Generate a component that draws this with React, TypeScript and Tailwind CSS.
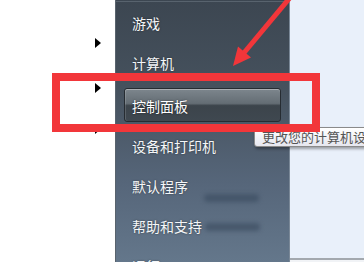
import React from 'react';

const items = [
  { label: '游戏' },
  { label: '计算机' },
];

const lower = [
  { label: '设备和打印机', blur: 0 },
  { label: '默认程序', blur: 16 },
  { label: '帮助和支持', blur: 2 },
  { label: '运行...', blur: 0 },
];

function Arrow() {
  return (
    <svg className="absolute inset-0 pointer-events-none" width="364" height="262" viewBox="0 0 364 262">
      <line x1="293" y1="-6" x2="243" y2="54" stroke="#f2363a" strokeWidth="5" />
      <polygon points="233,66 238,46.5 251,57.5" fill="#f2363a" />
    </svg>
  );
}

export default function App() {
  return (
    <div className="relative w-[364px] h-[262px] overflow-hidden bg-white font-['Noto_Sans_CJK_SC',sans-serif]">
      <div className="flex h-full">
        {/* left list arrows */}
        <div className="w-[115px] shrink-0 flex flex-col pl-[95px] pt-[38px]">
          <div className="shrink-0 w-0 h-0 border-y-[5px] border-y-transparent border-l-[6px] border-l-black" />
          <div className="shrink-0 mt-[35px] w-0 h-0 border-y-[5px] border-y-transparent border-l-[6px] border-l-black" />
          <div className="shrink-0 mt-[31px] w-0 h-0 border-y-[5px] border-y-transparent border-l-[6px] border-l-black" />
        </div>

        {/* start menu right pane */}
        <div className="w-[175px] shrink-0 flex flex-col overflow-hidden border-l border-[#59636d] border-r border-r-[#7a8897] bg-[linear-gradient(to_bottom,#3c4651_0%,#46525e_35%,#56667a_70%,#64778b_100%)]">
          <div className="shrink-0 h-px mt-px bg-[#58636e]" />
          <div className="shrink-0 pt-px">
            {items.map((it) => (
              <div key={it.label} className="h-[40px] flex items-center pl-[16px] text-[14px] text-[#f4f6f8] [text-shadow:0_0_2px_rgba(0,0,0,0.5)]">
                {it.label}
              </div>
            ))}
          </div>
          <div className="shrink-0 mt-[5px] ml-[8px] w-[157px] h-[34px] rounded-[3px] border border-[#262c32] bg-[linear-gradient(to_bottom,#7d868d_0%,#646d74_45%,#3c444b_52%,#3f4850_100%)] shadow-[inset_0_1px_0_rgba(255,255,255,0.35),inset_1px_0_0_rgba(255,255,255,0.15)] flex items-center pl-[7px] pt-[3px] text-[14px] text-white [text-shadow:0_0_2px_rgba(0,0,0,0.6)]">
            控制面板
          </div>
          <div className="shrink-0 mt-[4px]">
            {lower.map((it) => (
              <div key={it.label} className="h-[40px] flex items-center pl-[16px] text-[14px] text-[#f4f6f8] [text-shadow:0_0_2px_rgba(0,0,0,0.5)]">
                <span>{it.label}</span>
                {it.blur === 16 && <div className="ml-[16px] mt-[24px] w-[55px] h-[8px] rounded bg-[#45566a] blur-[2px]" />}
                {it.blur === 2 && <div className="ml-[3px] mt-[2px] w-[55px] h-[8px] rounded bg-[#47586c] blur-[2px]" />}
              </div>
            ))}
          </div>
        </div>

        {/* right light area */}
        <div className="flex-1 flex flex-col">
          <div className="shrink-0 h-[258px] bg-[#e9f0fa]" />
          <div className="shrink-0 h-[2px] bg-[#a3a8ae]" />
          <div className="flex-1 bg-[#f1f3f6]" />
        </div>
      </div>

      {/* tooltip */}
      <div className="absolute left-[254px] top-[127px] w-[130px] h-[20px] rounded-[3px] border border-[#8a8a8a] bg-[linear-gradient(to_bottom,#ffffff,#e6e7ef)] shadow-[1px_2px_3px_rgba(0,0,0,0.35)] pl-[7px] text-[13px] leading-[18px] text-[#555555] whitespace-nowrap">
        更改您的计算机设置
      </div>

      {/* red annotation */}
      <div className="absolute left-[52px] top-[73px] w-[268px] h-[59px] border-[8px] border-[#f2363a]" />
      <Arrow />
    </div>
  );
}
